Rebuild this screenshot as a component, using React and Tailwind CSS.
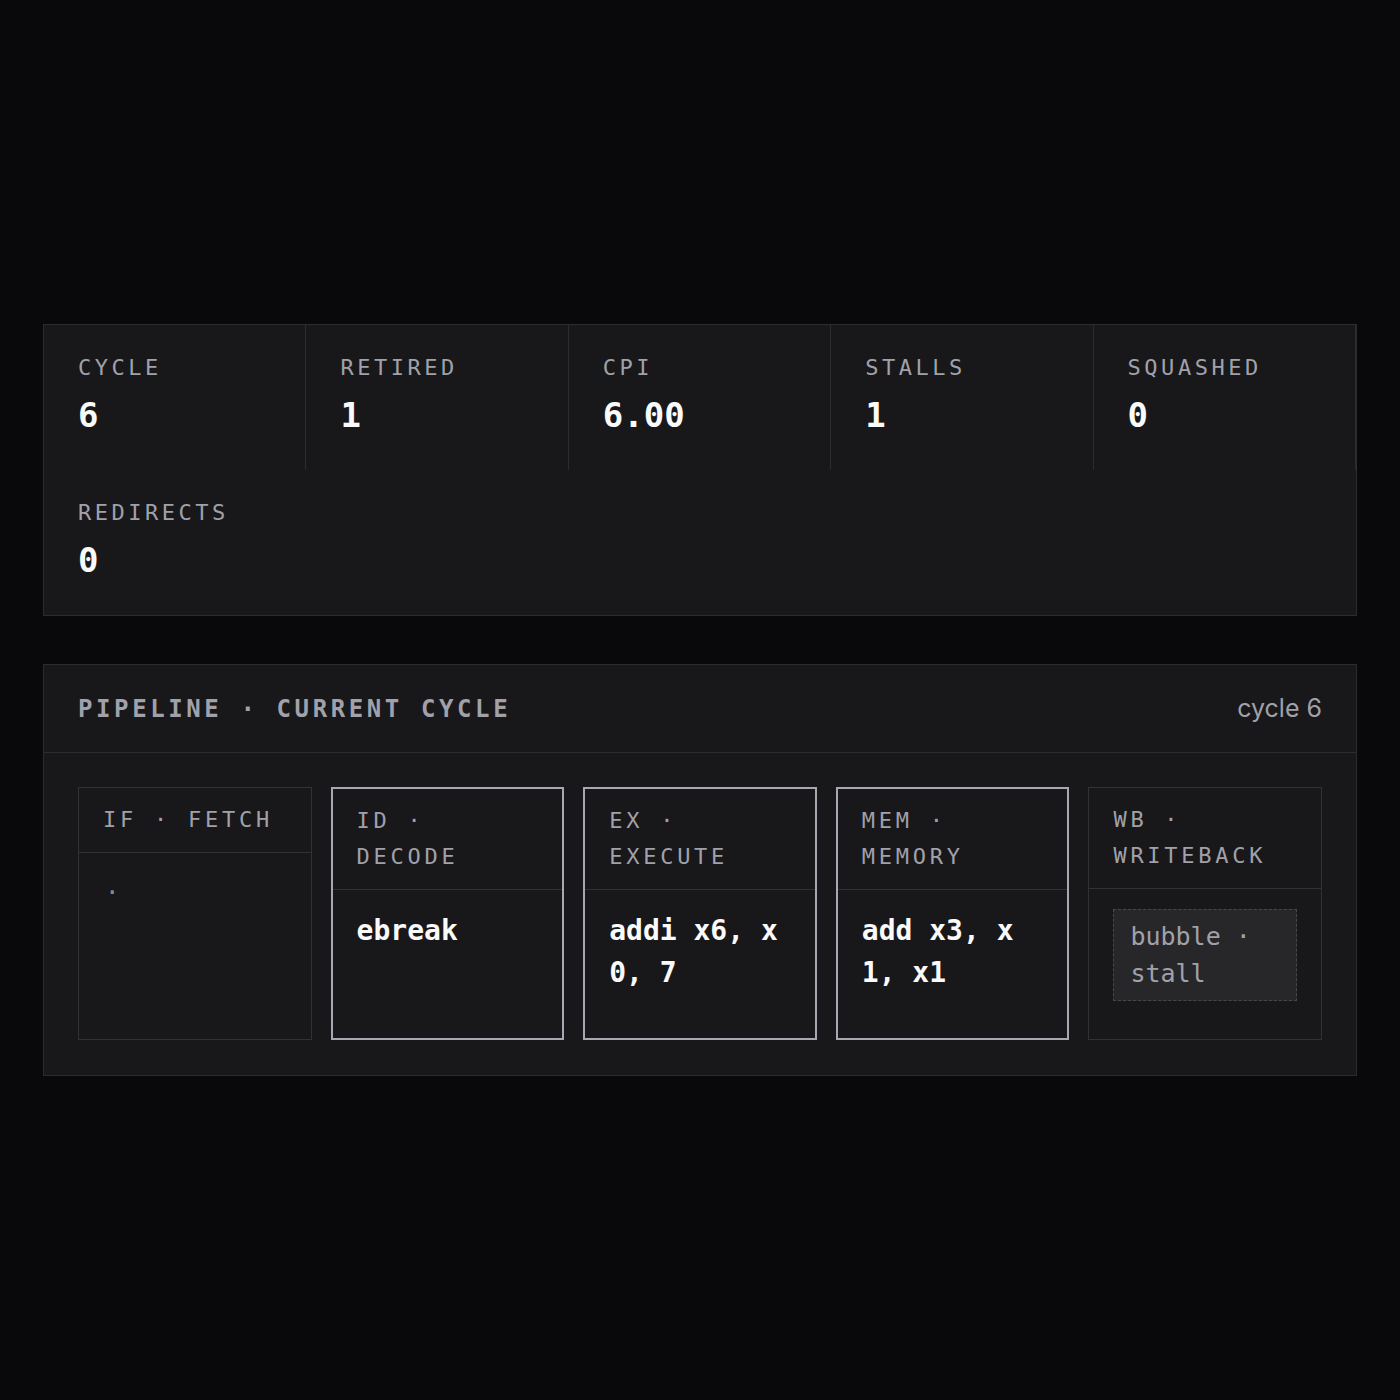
import React from 'react';

const stats = [
  { label: 'CYCLE', value: '6' },
  { label: 'RETIRED', value: '1' },
  { label: 'CPI', value: '6.00' },
  { label: 'STALLS', value: '1' },
  { label: 'SQUASHED', value: '0' },
  { label: 'REDIRECTS', value: '0' },
];

const stages = [
  { key: 'IF', name: 'FETCH', instr: null, active: false },
  { key: 'ID', name: 'DECODE', instr: 'ebreak', active: true },
  { key: 'EX', name: 'EXECUTE', instr: 'addi x6, x0, 7', active: true },
  { key: 'MEM', name: 'MEMORY', instr: 'add x3, x1, x1', active: true },
  { key: 'WB', name: 'WRITEBACK', instr: 'bubble', active: false },
];

const mono = "font-['DejaVu_Sans_Mono','Liberation_Mono',monospace]";

const StatCell = ({ label, value, last }) => (
  <div className={`px-[34px] pt-[26px] pb-[34px] ${last ? '' : 'border-r border-[#2c2c30]'}`}>
    <div className="text-[22px] leading-[33px] tracking-[0.16em] text-[#a1a1aa]">{label}</div>
    <div className="mt-[11px] text-[34px] leading-[41px] font-semibold text-[#fafafa]">{value}</div>
  </div>
);

const StageCard = ({ stage }) => {
  const border = stage.active ? 'border-2 border-[#a8a8b0]' : 'border border-[#323236]';
  return (
    <div className={`flex flex-col bg-[#18181b] ${border}`}>
      <div className="px-6 py-[14px] border-b border-[#323236] text-[22px] leading-[36px] tracking-[0.17em] text-[#a1a1aa] font-medium">
        {stage.key} · {stage.name}
      </div>
      <div className="flex-1 min-h-[148px] px-6 pt-5 pb-6">
        {stage.instr === null && (
          <div className="pl-[2px] pt-[2px] text-[24px] leading-[36px] text-[#8a8a92]">·</div>
        )}
        {stage.instr === 'bubble' && (
          <div className="bg-[#27272a] border border-dashed border-[#46464c] px-4 py-2 text-[25px] leading-[37px] text-[#a1a1aa]">
            bubble · stall
          </div>
        )}
        {stage.instr && stage.instr !== 'bubble' && (
          <div className="text-[28px] leading-[42px] font-semibold text-[#fafafa] break-all">
            {stage.instr}
          </div>
        )}
      </div>
    </div>
  );
};

export default function App() {
  return (
    <div className={`min-h-[1400px] bg-[#09090b] flex flex-col justify-center gap-12 px-[43px] ${mono}`}>
      <div className="bg-[#18181b] border border-[#2c2c30] grid grid-cols-5">
        {stats.map((s, i) => (
          <StatCell key={s.label} {...s} last={i === stats.length - 1} />
        ))}
      </div>

      <div className="bg-[#18181b] border border-[#2c2c30]">
        <div className="h-[88px] px-[34px] flex items-center justify-between border-b border-[#2c2c30]">
          <div className="text-[24px] font-semibold tracking-[0.15em] text-[#a1a1aa]">
            PIPELINE · CURRENT CYCLE
          </div>
          <div className="font-['Inter',sans-serif] text-[25px] text-[#a1a1aa]">cycle 6</div>
        </div>
        <div className="px-[34px] pt-[34px] pb-[35px] grid grid-cols-5 gap-[19px]">
          {stages.map((st) => (
            <StageCard key={st.key} stage={st} />
          ))}
        </div>
      </div>
    </div>
  );
}
